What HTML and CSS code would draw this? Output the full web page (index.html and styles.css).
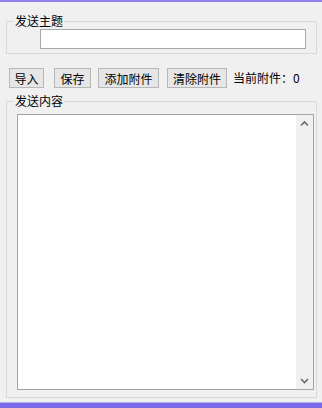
FILE: index.html
```html
<!DOCTYPE html>
<html lang="zh">
<head>
<meta charset="utf-8">
<title>发送</title>
<link rel="stylesheet" href="styles.css">
</head>
<body>
<div class="topbar"></div>
<div class="main">
  <fieldset class="group group-subject">
    <legend>发送主题</legend>
    <input class="subject" type="text">
  </fieldset>
  <div class="toolbar">
    <button class="btn b-import">导入</button>
    <button class="btn b-save">保存</button>
    <button class="btn b-add">添加附件</button>
    <button class="btn b-clear">清除附件</button>
    <span class="count">当前附件：0</span>
  </div>
  <fieldset class="group group-body">
    <legend>发送内容</legend>
    <div class="editor">
      <textarea class="text"></textarea>
      <div class="scroll">
        <svg class="arrow" width="17" height="17" viewBox="0 0 17 17"><path d="M5 10.5 L8.5 7 L12 10.5" fill="none" stroke="#6a6a6a" stroke-width="1.6"/></svg>
        <svg class="arrow" width="17" height="17" viewBox="0 0 17 17"><path d="M5 7 L8.5 10.5 L12 7" fill="none" stroke="#6a6a6a" stroke-width="1.6"/></svg>
      </div>
    </div>
  </fieldset>
</div>
<div class="bottombar"></div>
</body>
</html>
```
FILE: styles.css
```css
html, body {
  margin: 0;
  padding: 0;
}
body {
  width: 322px;
  height: 408px;
  background: #f0f0f0;
  display: flex;
  flex-direction: column;
  font-family: "Noto Sans CJK SC", "Liberation Sans", sans-serif;
  font-size: 12px;
  color: #000;
  overflow: hidden;
}
.topbar {
  height: 2px;
  background: #8f80ec;
  flex: none;
}
.main {
  padding: 12px 5px 0 6px;
  flex: none;
}
.group {
  margin: 0;
  border: 1px solid #d9d9d9;
  min-width: 0;
  box-sizing: border-box;
}
.group legend {
  padding: 0 1px;
  margin-left: 0;
  line-height: 14px;
  font-size: 12px;
}
.group-subject {
  padding: 1px 10px 4px 7px;
}
.subject {
  display: block;
  width: 266px;
  height: 20px;
  box-sizing: border-box;
  border: 1px solid #a8a8a8;
  background: #fff;
  margin: 0 0 0 26px;
  padding: 0 2px;
  outline: none;
}
.toolbar {
  margin-top: 14px;
  padding-left: 3px;
  display: flex;
  align-items: center;
  height: 20px;
}
.btn {
  height: 20px;
  box-sizing: border-box;
  border: 1px solid #b7b7b7;
  background: #e6e6e6;
  font-family: inherit;
  font-size: 12px;
  line-height: 17px;
  padding: 0;
  margin: 0;
  color: #000;
  border-radius: 0;
}
.b-import { width: 35px; margin-right: 10px; }
.b-save { width: 37px; margin-right: 7px; }
.b-add { width: 61px; margin-right: 8px; }
.b-clear { width: 60px; margin-right: 6px; }
.count {
  line-height: 20px;
}
.group-body {
  margin-top: 6px;
  padding: 6px 2px 7px 7px;
}
.editor {
  display: flex;
  height: 276px;
  margin-left: 3px;
  box-sizing: border-box;
  border: 1px solid #a3a3a3;
  background: #fff;
}
.text {
  flex: 1;
  border: none;
  outline: none;
  resize: none;
  margin: 0;
  padding: 0;
  background: #fff;
  font-family: inherit;
  font-size: 12px;
}
.scroll {
  width: 17px;
  flex: none;
  background: #f0f0f0;
  display: flex;
  flex-direction: column;
  justify-content: space-between;
}
.arrow {
  display: block;
}
.bottombar {
  margin-top: auto;
  height: 6px;
  background: #7a69e8;
  border-top: 1px solid #b9b0f2;
  box-sizing: border-box;
  flex: none;
}
```
